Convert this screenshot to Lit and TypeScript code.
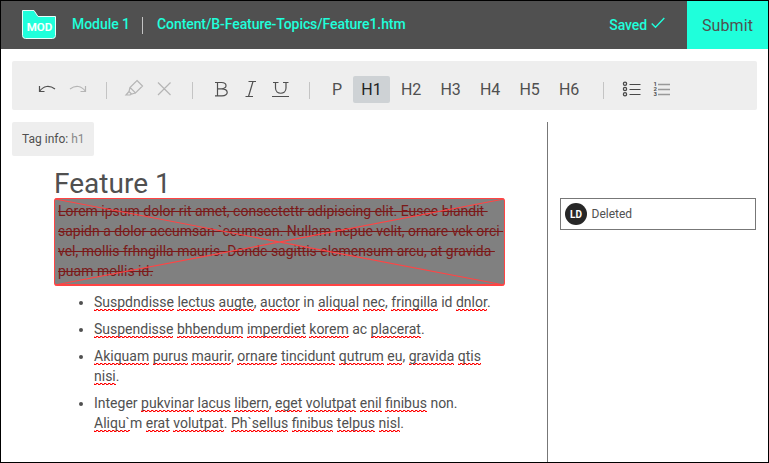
import { LitElement, html, css } from "lit";
import { customElement } from "lit/decorators.js";

// Words wrapped in [ ] carry a spelling marker.
const items: string[][] = [
  ["[Suspdndisse] [lectus] [augte], [auctor] in [aliqual] [nec], [fringilla] id [dnlor]."],
  ["[Suspendisse] [bhbendum] [imperdiet] [korem] ac [placerat]."],
  ["[Akiquam] [purus] [maurir], [ornare] [tincidunt] [qutrum] [eu], [gravida] [qtis]", "[nisi]."],
  ["Integer [pukvinar] [lacus] [libern], [eget] [volutpat] [enil] [finibus] non.", "[Aliqu`]m [erat] [volutpat]. [Ph`sellus] [finibus] [telpus] [nisl]."],
];

const deleted: string[] = [
  "Lorem ipsum dolor rit amet, consectettr adipiscing elit. Eusce blandit ",
  "sapidn a dolor accumsan `ccumsan. Nullam nepue velit, ornare vek orci ",
  "vel, mollis frhngilla mauris. Dondc sagittis elemensum arcu, at gravida ",
  "puam mollis id.",
];

const mark = (line: string) =>
  line.split(/(\[[^\]]+\])/).filter(Boolean).map((p) =>
    p.startsWith("[") ? html`<span class="sp">${p.slice(1, -1)}</span>` : p);

@customElement("app-root")
export class AppRoot extends LitElement {
  static styles = css`
    :host { display: block; box-sizing: border-box; width: 769px; height: 463px; border: 1px solid #000; background: #fff; font-family: Roboto, sans-serif; color: #505050; overflow: hidden; }
    * { box-sizing: border-box; }
    svg { display: block; flex: none; }
    header { height: 48px; display: flex; align-items: center; background: #505050; color: #1fffdb; font-size: 14px; font-weight: 500; white-space: nowrap; }
    .logo { margin: 0 0 0 21px; }
    .module { margin-left: 16px; width: 57px; line-height: 20px; padding-bottom: 2px; letter-spacing: -0.05px; }
    .bar { width: 1px; height: 17px; background: #c4c4c4; flex: none; }
    header .bar { margin: 0 14px 0 13px; }
    .path { padding-bottom: 2px; letter-spacing: -0.08px; }
    .saved { margin-left: auto; margin-right: 4px; letter-spacing: -0.1px; }
    .check { margin-right: 22px; margin-bottom: 4px; }
    .submit { width: 81px; height: 48px; border: 0; padding: 0; background: #1fffdb; color: #505050; font: 400 16px Roboto, sans-serif; letter-spacing: 0.1px; }
    .tools { height: 49px; margin: 12px 11px 12px; padding: 8px 0 0 25px; background: #eee; border-radius: 2px; display: flex; align-items: center; font-size: 16px; }
    .b { height: 27px; display: flex; align-items: center; justify-content: center; border-radius: 2px; width: 39.5px; flex: none; }
    .b.p { width: 32px; }
    .b.on { background: #ced2d5; color: #222; width: 37px; margin-right: 1.4px; }
    .lists { margin-left: 0.1px; }
    main { display: flex; height: 340px; }
    .doc { width: 547px; padding-left: 11px; border-right: 1px solid #777; flex: none; }
    .tag { width: 82px; height: 34px; background: #eee; border-radius: 2px; padding-left: 10px; font-size: 12px; line-height: 34px; white-space: nowrap; }
    .tag span { color: #888; }
    h1 { margin: 11px 0 0 42px; font-size: 28px; line-height: 33px; font-weight: 400; height: 31px; letter-spacing: 0.03px; }
    .del { position: relative; width: 451px; height: 88px; margin: 0 0 0 42px; padding: 2px 3px 0 3px; background: #808080; border: 1px solid #ff4444; border-bottom-width: 2px; border-radius: 3px; font-size: 14px; line-height: 20px; color: #7b1919; }
    .del div { text-decoration: line-through; white-space: pre; height: 20px; }
    .cross { position: absolute; left: -1px; top: -1px; }
    ul { margin: 6px 0 0 82px; padding: 0; font-size: 14px; line-height: 20px; }
    li { margin-bottom: 7px; }
    li div { white-space: pre; height: 20px; }
    .sp { padding-bottom: 1px; background: linear-gradient(90deg, #f00 60%, #f008 60%, transparent 85%) 0 100% / 4px 1px repeat-x, linear-gradient(90deg, #f006 10%, transparent 40%, #f00 50%) 0 calc(100% - 1px) / 4px 1px repeat-x; }
    .note { margin: 76px 0 0 12px; width: 196px; height: 32px; border: 1px solid #777; display: flex; align-items: center; padding-left: 4px; font-size: 12px; }
    .av { width: 22px; height: 22px; border-radius: 50%; background: #272727; color: #fff; font-size: 10px; font-weight: 700; display: flex; align-items: center; justify-content: center; margin-right: 4.5px; }
  `;

  render() {
    return html`
      <header>
        <svg class="logo" width="34" height="30" viewBox="0 0 34 30">
          <path d="M.5 .5H12L16 6.500H33.500V25.500a3 3 0 0 1-3 3H3.500a3 3 0 0 1-3-3Z" fill="#1fffdb" stroke="#e8fffb" />
          <text x="17.500" y="21" text-anchor="middle" font-size="11.500" font-weight="500" fill="#fff" stroke="#fff" stroke-width=".2" font-family="Roboto">MOD</text>
        </svg>
        <span class="module">Module 1</span><span class="bar"></span>
        <span class="path">Content/B-Feature-Topics/Feature1.htm</span>
        <span class="saved">Saved</span>
        <svg class="check" width="14" height="12" viewBox="0 0 14 12" fill="none"><path d="M.7 6.500L4.500 10.300L13.300 1" stroke="#1fffdb" stroke-width="1.400" /></svg>
        <button class="submit">Submit</button>
      </header>
      <nav class="tools">
        <svg width="284" height="27" viewBox="0 0 284 27" fill="none" stroke="#505050" stroke-width="1.200">
          <path d="M2.500 10V15.500H7.500M2.500 15.500C6.500 9.500 12.500 9 18 13" />
          <g stroke="#b5b5b5">
            <path d="M48.500 10V15.500H43.500M48.500 15.500C44.500 9.500 38.500 9 33 13" />
            <path d="M100 4.500L105.500 10L98.500 17L93 11.500ZM93 11.500L92 15.500L94.500 18L98.500 17M92 15.500L89 19H93L94.500 18M121 6.500L133.500 19M133.500 6.500L121 19" />
          </g>
          <path d="M69.500 6V23M155.500 6V23M272.500 6V23" stroke="#c4c4c4" stroke-width="1" />
          <path d="M178 6.500H184.500C190.500 6.500 190.500 12.800 184.500 12.800H180.500M180.500 6.500V19.800M178 19.800H185C192 19.800 192 12.800 184.500 12.800M211.500 5.500H219M208.500 20.500H216M216 5.500L211.500 20.500M236 6.500H241.500M246 6.500H251.500M238.500 6.500V12C238.500 19 249 19 249 12V6.500M235 20.500H252" />
        </svg>
        ${["P", "H1", "H2", "H3", "H4", "H5", "H6"].map((t) => html`<span class="b ${t === "H1" ? "on" : t === "P" ? "p" : ""}">${t}</span>`)}
        <svg class="lists" width="84" height="27" viewBox="0 0 84 27" fill="none" stroke="#484848" stroke-width="1">
          <path d="M14.500 6V23" stroke="#c4c4c4" />
          <g stroke-width="1.300"><circle cx="36" cy="7.700" r="1.600" /><circle cx="36" cy="13" r="1.600" /><circle cx="36" cy="18.300" r="1.600" /></g>
          <path d="M40.500 8.500H51.500M40.500 13.500H51.500M40.500 18.500H51.500" />
          <path d="M69 8.500H81M69 13.500H81M69 18.500H81" stroke="#999" stroke-width="1.300" />
          <text fill="#505050" stroke="none" font-family="Roboto" font-size="6" font-weight="700"><tspan x="64.500" y="10">1</tspan><tspan x="64.500" y="15">2</tspan><tspan x="64.500" y="20">3</tspan></text>
        </svg>
      </nav>
      <main>
        <section class="doc">
          <div class="tag">Tag info: <span>h1</span></div>
          <h1>Feature 1</h1>
          <div class="del">
            ${deleted.map((l) => html`<div>${l}</div>`)}
            <svg class="cross" width="451" height="88" viewBox="0 0 451 88" stroke="#ff4444" stroke-width="1.200"><path d="M1 1L450 87M1 87L450 1" /></svg>
          </div>
          <ul>${items.map((ls) => html`<li>${ls.map((l) => html`<div>${mark(l)}</div>`)}</li>`)}</ul>
        </section>
        <aside><div class="note"><span class="av">LD</span>Deleted</div></aside>
      </main>`;
  }
}
